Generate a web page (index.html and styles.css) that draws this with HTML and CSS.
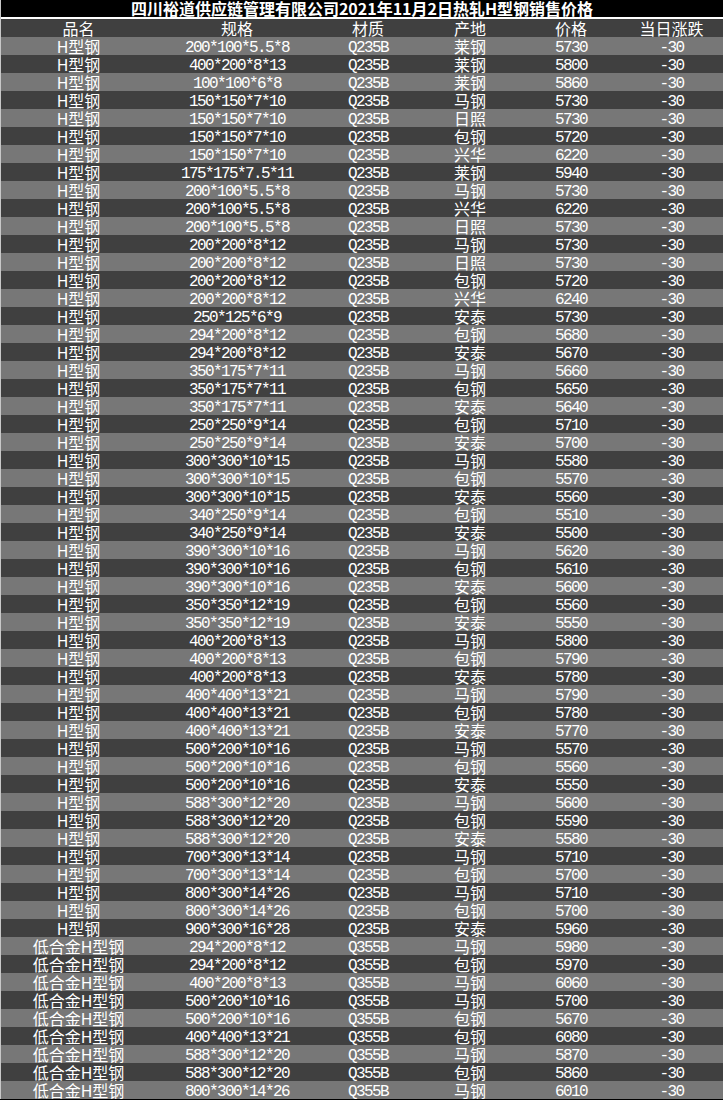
FILE: index.html
```html
<!DOCTYPE html>
<html lang="zh-CN">
<head>
<meta charset="utf-8">
<title>四川裕道供应链管理有限公司2021年11月2日热轧H型钢销售价格</title>
<link rel="stylesheet" href="styles.css">
</head>
<body>
<div class="sheet">
  <div class="title"><span>四川裕道供应链管理有限公司2021年11月2日热轧H型钢销售价格</span></div>
  <div class="table">
    <div class="row head"><span class="cjk">品名</span><span class="cjk">规格</span><span class="cjk">材质</span><span class="cjk">产地</span><span class="cjk">价格</span><span class="cjk">当日涨跌</span></div>
    <div class="row"><span class="cjk">H型钢</span><span class="num">200*100*5.5*8</span><span class="num">Q235B</span><span class="cjk">莱钢</span><span class="num">5730</span><span class="num">-30</span></div>
    <div class="row"><span class="cjk">H型钢</span><span class="num">400*200*8*13</span><span class="num">Q235B</span><span class="cjk">莱钢</span><span class="num">5800</span><span class="num">-30</span></div>
    <div class="row"><span class="cjk">H型钢</span><span class="num">100*100*6*8</span><span class="num">Q235B</span><span class="cjk">莱钢</span><span class="num">5860</span><span class="num">-30</span></div>
    <div class="row"><span class="cjk">H型钢</span><span class="num">150*150*7*10</span><span class="num">Q235B</span><span class="cjk">马钢</span><span class="num">5730</span><span class="num">-30</span></div>
    <div class="row"><span class="cjk">H型钢</span><span class="num">150*150*7*10</span><span class="num">Q235B</span><span class="cjk">日照</span><span class="num">5730</span><span class="num">-30</span></div>
    <div class="row"><span class="cjk">H型钢</span><span class="num">150*150*7*10</span><span class="num">Q235B</span><span class="cjk">包钢</span><span class="num">5720</span><span class="num">-30</span></div>
    <div class="row"><span class="cjk">H型钢</span><span class="num">150*150*7*10</span><span class="num">Q235B</span><span class="cjk">兴华</span><span class="num">6220</span><span class="num">-30</span></div>
    <div class="row"><span class="cjk">H型钢</span><span class="num">175*175*7.5*11</span><span class="num">Q235B</span><span class="cjk">莱钢</span><span class="num">5940</span><span class="num">-30</span></div>
    <div class="row"><span class="cjk">H型钢</span><span class="num">200*100*5.5*8</span><span class="num">Q235B</span><span class="cjk">马钢</span><span class="num">5730</span><span class="num">-30</span></div>
    <div class="row"><span class="cjk">H型钢</span><span class="num">200*100*5.5*8</span><span class="num">Q235B</span><span class="cjk">兴华</span><span class="num">6220</span><span class="num">-30</span></div>
    <div class="row"><span class="cjk">H型钢</span><span class="num">200*100*5.5*8</span><span class="num">Q235B</span><span class="cjk">日照</span><span class="num">5730</span><span class="num">-30</span></div>
    <div class="row"><span class="cjk">H型钢</span><span class="num">200*200*8*12</span><span class="num">Q235B</span><span class="cjk">马钢</span><span class="num">5730</span><span class="num">-30</span></div>
    <div class="row"><span class="cjk">H型钢</span><span class="num">200*200*8*12</span><span class="num">Q235B</span><span class="cjk">日照</span><span class="num">5730</span><span class="num">-30</span></div>
    <div class="row"><span class="cjk">H型钢</span><span class="num">200*200*8*12</span><span class="num">Q235B</span><span class="cjk">包钢</span><span class="num">5720</span><span class="num">-30</span></div>
    <div class="row"><span class="cjk">H型钢</span><span class="num">200*200*8*12</span><span class="num">Q235B</span><span class="cjk">兴华</span><span class="num">6240</span><span class="num">-30</span></div>
    <div class="row"><span class="cjk">H型钢</span><span class="num">250*125*6*9</span><span class="num">Q235B</span><span class="cjk">安泰</span><span class="num">5730</span><span class="num">-30</span></div>
    <div class="row"><span class="cjk">H型钢</span><span class="num">294*200*8*12</span><span class="num">Q235B</span><span class="cjk">包钢</span><span class="num">5680</span><span class="num">-30</span></div>
    <div class="row"><span class="cjk">H型钢</span><span class="num">294*200*8*12</span><span class="num">Q235B</span><span class="cjk">安泰</span><span class="num">5670</span><span class="num">-30</span></div>
    <div class="row"><span class="cjk">H型钢</span><span class="num">350*175*7*11</span><span class="num">Q235B</span><span class="cjk">马钢</span><span class="num">5660</span><span class="num">-30</span></div>
    <div class="row"><span class="cjk">H型钢</span><span class="num">350*175*7*11</span><span class="num">Q235B</span><span class="cjk">包钢</span><span class="num">5650</span><span class="num">-30</span></div>
    <div class="row"><span class="cjk">H型钢</span><span class="num">350*175*7*11</span><span class="num">Q235B</span><span class="cjk">安泰</span><span class="num">5640</span><span class="num">-30</span></div>
    <div class="row"><span class="cjk">H型钢</span><span class="num">250*250*9*14</span><span class="num">Q235B</span><span class="cjk">包钢</span><span class="num">5710</span><span class="num">-30</span></div>
    <div class="row"><span class="cjk">H型钢</span><span class="num">250*250*9*14</span><span class="num">Q235B</span><span class="cjk">安泰</span><span class="num">5700</span><span class="num">-30</span></div>
    <div class="row"><span class="cjk">H型钢</span><span class="num">300*300*10*15</span><span class="num">Q235B</span><span class="cjk">马钢</span><span class="num">5580</span><span class="num">-30</span></div>
    <div class="row"><span class="cjk">H型钢</span><span class="num">300*300*10*15</span><span class="num">Q235B</span><span class="cjk">包钢</span><span class="num">5570</span><span class="num">-30</span></div>
    <div class="row"><span class="cjk">H型钢</span><span class="num">300*300*10*15</span><span class="num">Q235B</span><span class="cjk">安泰</span><span class="num">5560</span><span class="num">-30</span></div>
    <div class="row"><span class="cjk">H型钢</span><span class="num">340*250*9*14</span><span class="num">Q235B</span><span class="cjk">包钢</span><span class="num">5510</span><span class="num">-30</span></div>
    <div class="row"><span class="cjk">H型钢</span><span class="num">340*250*9*14</span><span class="num">Q235B</span><span class="cjk">安泰</span><span class="num">5500</span><span class="num">-30</span></div>
    <div class="row"><span class="cjk">H型钢</span><span class="num">390*300*10*16</span><span class="num">Q235B</span><span class="cjk">马钢</span><span class="num">5620</span><span class="num">-30</span></div>
    <div class="row"><span class="cjk">H型钢</span><span class="num">390*300*10*16</span><span class="num">Q235B</span><span class="cjk">包钢</span><span class="num">5610</span><span class="num">-30</span></div>
    <div class="row"><span class="cjk">H型钢</span><span class="num">390*300*10*16</span><span class="num">Q235B</span><span class="cjk">安泰</span><span class="num">5600</span><span class="num">-30</span></div>
    <div class="row"><span class="cjk">H型钢</span><span class="num">350*350*12*19</span><span class="num">Q235B</span><span class="cjk">包钢</span><span class="num">5560</span><span class="num">-30</span></div>
    <div class="row"><span class="cjk">H型钢</span><span class="num">350*350*12*19</span><span class="num">Q235B</span><span class="cjk">安泰</span><span class="num">5550</span><span class="num">-30</span></div>
    <div class="row"><span class="cjk">H型钢</span><span class="num">400*200*8*13</span><span class="num">Q235B</span><span class="cjk">马钢</span><span class="num">5800</span><span class="num">-30</span></div>
    <div class="row"><span class="cjk">H型钢</span><span class="num">400*200*8*13</span><span class="num">Q235B</span><span class="cjk">包钢</span><span class="num">5790</span><span class="num">-30</span></div>
    <div class="row"><span class="cjk">H型钢</span><span class="num">400*200*8*13</span><span class="num">Q235B</span><span class="cjk">安泰</span><span class="num">5780</span><span class="num">-30</span></div>
    <div class="row"><span class="cjk">H型钢</span><span class="num">400*400*13*21</span><span class="num">Q235B</span><span class="cjk">马钢</span><span class="num">5790</span><span class="num">-30</span></div>
    <div class="row"><span class="cjk">H型钢</span><span class="num">400*400*13*21</span><span class="num">Q235B</span><span class="cjk">包钢</span><span class="num">5780</span><span class="num">-30</span></div>
    <div class="row"><span class="cjk">H型钢</span><span class="num">400*400*13*21</span><span class="num">Q235B</span><span class="cjk">安泰</span><span class="num">5770</span><span class="num">-30</span></div>
    <div class="row"><span class="cjk">H型钢</span><span class="num">500*200*10*16</span><span class="num">Q235B</span><span class="cjk">马钢</span><span class="num">5570</span><span class="num">-30</span></div>
    <div class="row"><span class="cjk">H型钢</span><span class="num">500*200*10*16</span><span class="num">Q235B</span><span class="cjk">包钢</span><span class="num">5560</span><span class="num">-30</span></div>
    <div class="row"><span class="cjk">H型钢</span><span class="num">500*200*10*16</span><span class="num">Q235B</span><span class="cjk">安泰</span><span class="num">5550</span><span class="num">-30</span></div>
    <div class="row"><span class="cjk">H型钢</span><span class="num">588*300*12*20</span><span class="num">Q235B</span><span class="cjk">马钢</span><span class="num">5600</span><span class="num">-30</span></div>
    <div class="row"><span class="cjk">H型钢</span><span class="num">588*300*12*20</span><span class="num">Q235B</span><span class="cjk">包钢</span><span class="num">5590</span><span class="num">-30</span></div>
    <div class="row"><span class="cjk">H型钢</span><span class="num">588*300*12*20</span><span class="num">Q235B</span><span class="cjk">安泰</span><span class="num">5580</span><span class="num">-30</span></div>
    <div class="row"><span class="cjk">H型钢</span><span class="num">700*300*13*14</span><span class="num">Q235B</span><span class="cjk">马钢</span><span class="num">5710</span><span class="num">-30</span></div>
    <div class="row"><span class="cjk">H型钢</span><span class="num">700*300*13*14</span><span class="num">Q235B</span><span class="cjk">包钢</span><span class="num">5700</span><span class="num">-30</span></div>
    <div class="row"><span class="cjk">H型钢</span><span class="num">800*300*14*26</span><span class="num">Q235B</span><span class="cjk">马钢</span><span class="num">5710</span><span class="num">-30</span></div>
    <div class="row"><span class="cjk">H型钢</span><span class="num">800*300*14*26</span><span class="num">Q235B</span><span class="cjk">包钢</span><span class="num">5700</span><span class="num">-30</span></div>
    <div class="row"><span class="cjk">H型钢</span><span class="num">900*300*16*28</span><span class="num">Q235B</span><span class="cjk">安泰</span><span class="num">5960</span><span class="num">-30</span></div>
    <div class="row"><span class="cjk">低合金H型钢</span><span class="num">294*200*8*12</span><span class="num">Q355B</span><span class="cjk">马钢</span><span class="num">5980</span><span class="num">-30</span></div>
    <div class="row"><span class="cjk">低合金H型钢</span><span class="num">294*200*8*12</span><span class="num">Q355B</span><span class="cjk">包钢</span><span class="num">5970</span><span class="num">-30</span></div>
    <div class="row"><span class="cjk">低合金H型钢</span><span class="num">400*200*8*13</span><span class="num">Q355B</span><span class="cjk">马钢</span><span class="num">6060</span><span class="num">-30</span></div>
    <div class="row"><span class="cjk">低合金H型钢</span><span class="num">500*200*10*16</span><span class="num">Q355B</span><span class="cjk">马钢</span><span class="num">5700</span><span class="num">-30</span></div>
    <div class="row"><span class="cjk">低合金H型钢</span><span class="num">500*200*10*16</span><span class="num">Q355B</span><span class="cjk">包钢</span><span class="num">5670</span><span class="num">-30</span></div>
    <div class="row"><span class="cjk">低合金H型钢</span><span class="num">400*400*13*21</span><span class="num">Q355B</span><span class="cjk">包钢</span><span class="num">6080</span><span class="num">-30</span></div>
    <div class="row"><span class="cjk">低合金H型钢</span><span class="num">588*300*12*20</span><span class="num">Q355B</span><span class="cjk">马钢</span><span class="num">5870</span><span class="num">-30</span></div>
    <div class="row"><span class="cjk">低合金H型钢</span><span class="num">588*300*12*20</span><span class="num">Q355B</span><span class="cjk">包钢</span><span class="num">5860</span><span class="num">-30</span></div>
    <div class="row"><span class="cjk">低合金H型钢</span><span class="num">800*300*14*26</span><span class="num">Q355B</span><span class="cjk">马钢</span><span class="num">6010</span><span class="num">-30</span></div>
  </div>
</div>
</body>
</html>
```

FILE: styles.css
```css
html, body {
  margin: 0;
  padding: 0;
  background: #000;
}

.sheet {
  width: 722px;
  border-left: 1px solid #c8c8c8;
  color: #fff;
}

.title {
  height: 17px;
  background: #000;
  border-bottom: 2px solid #fff;
  display: flex;
  align-items: flex-start;
  justify-content: center;
  font-family: "Noto Sans CJK SC", sans-serif;
  font-weight: 700;
  font-size: 16px;
  line-height: 16px;
  white-space: nowrap;
}

.table {
  display: flex;
  flex-direction: column;
}

.row {
  display: grid;
  grid-template-columns: 155px 162px 100px 104px 98px 103px;
  height: 18px;
  background: #404040;
}

.row:nth-child(even) {
  background: #777777;
}

.row span {
  display: flex;
  align-items: flex-start;
  justify-content: center;
  height: 18px;
  box-sizing: border-box;
  white-space: nowrap;
}

.cjk {
  font-family: "Noto Sans CJK SC", sans-serif;
  font-size: 16px;
  line-height: 16px;
  padding-top: 1px;
}

.num {
  font-family: "Liberation Mono", monospace;
  font-size: 16px;
  line-height: 16px;
  letter-spacing: -1.6px;
  padding-top: 3px;
}
```
